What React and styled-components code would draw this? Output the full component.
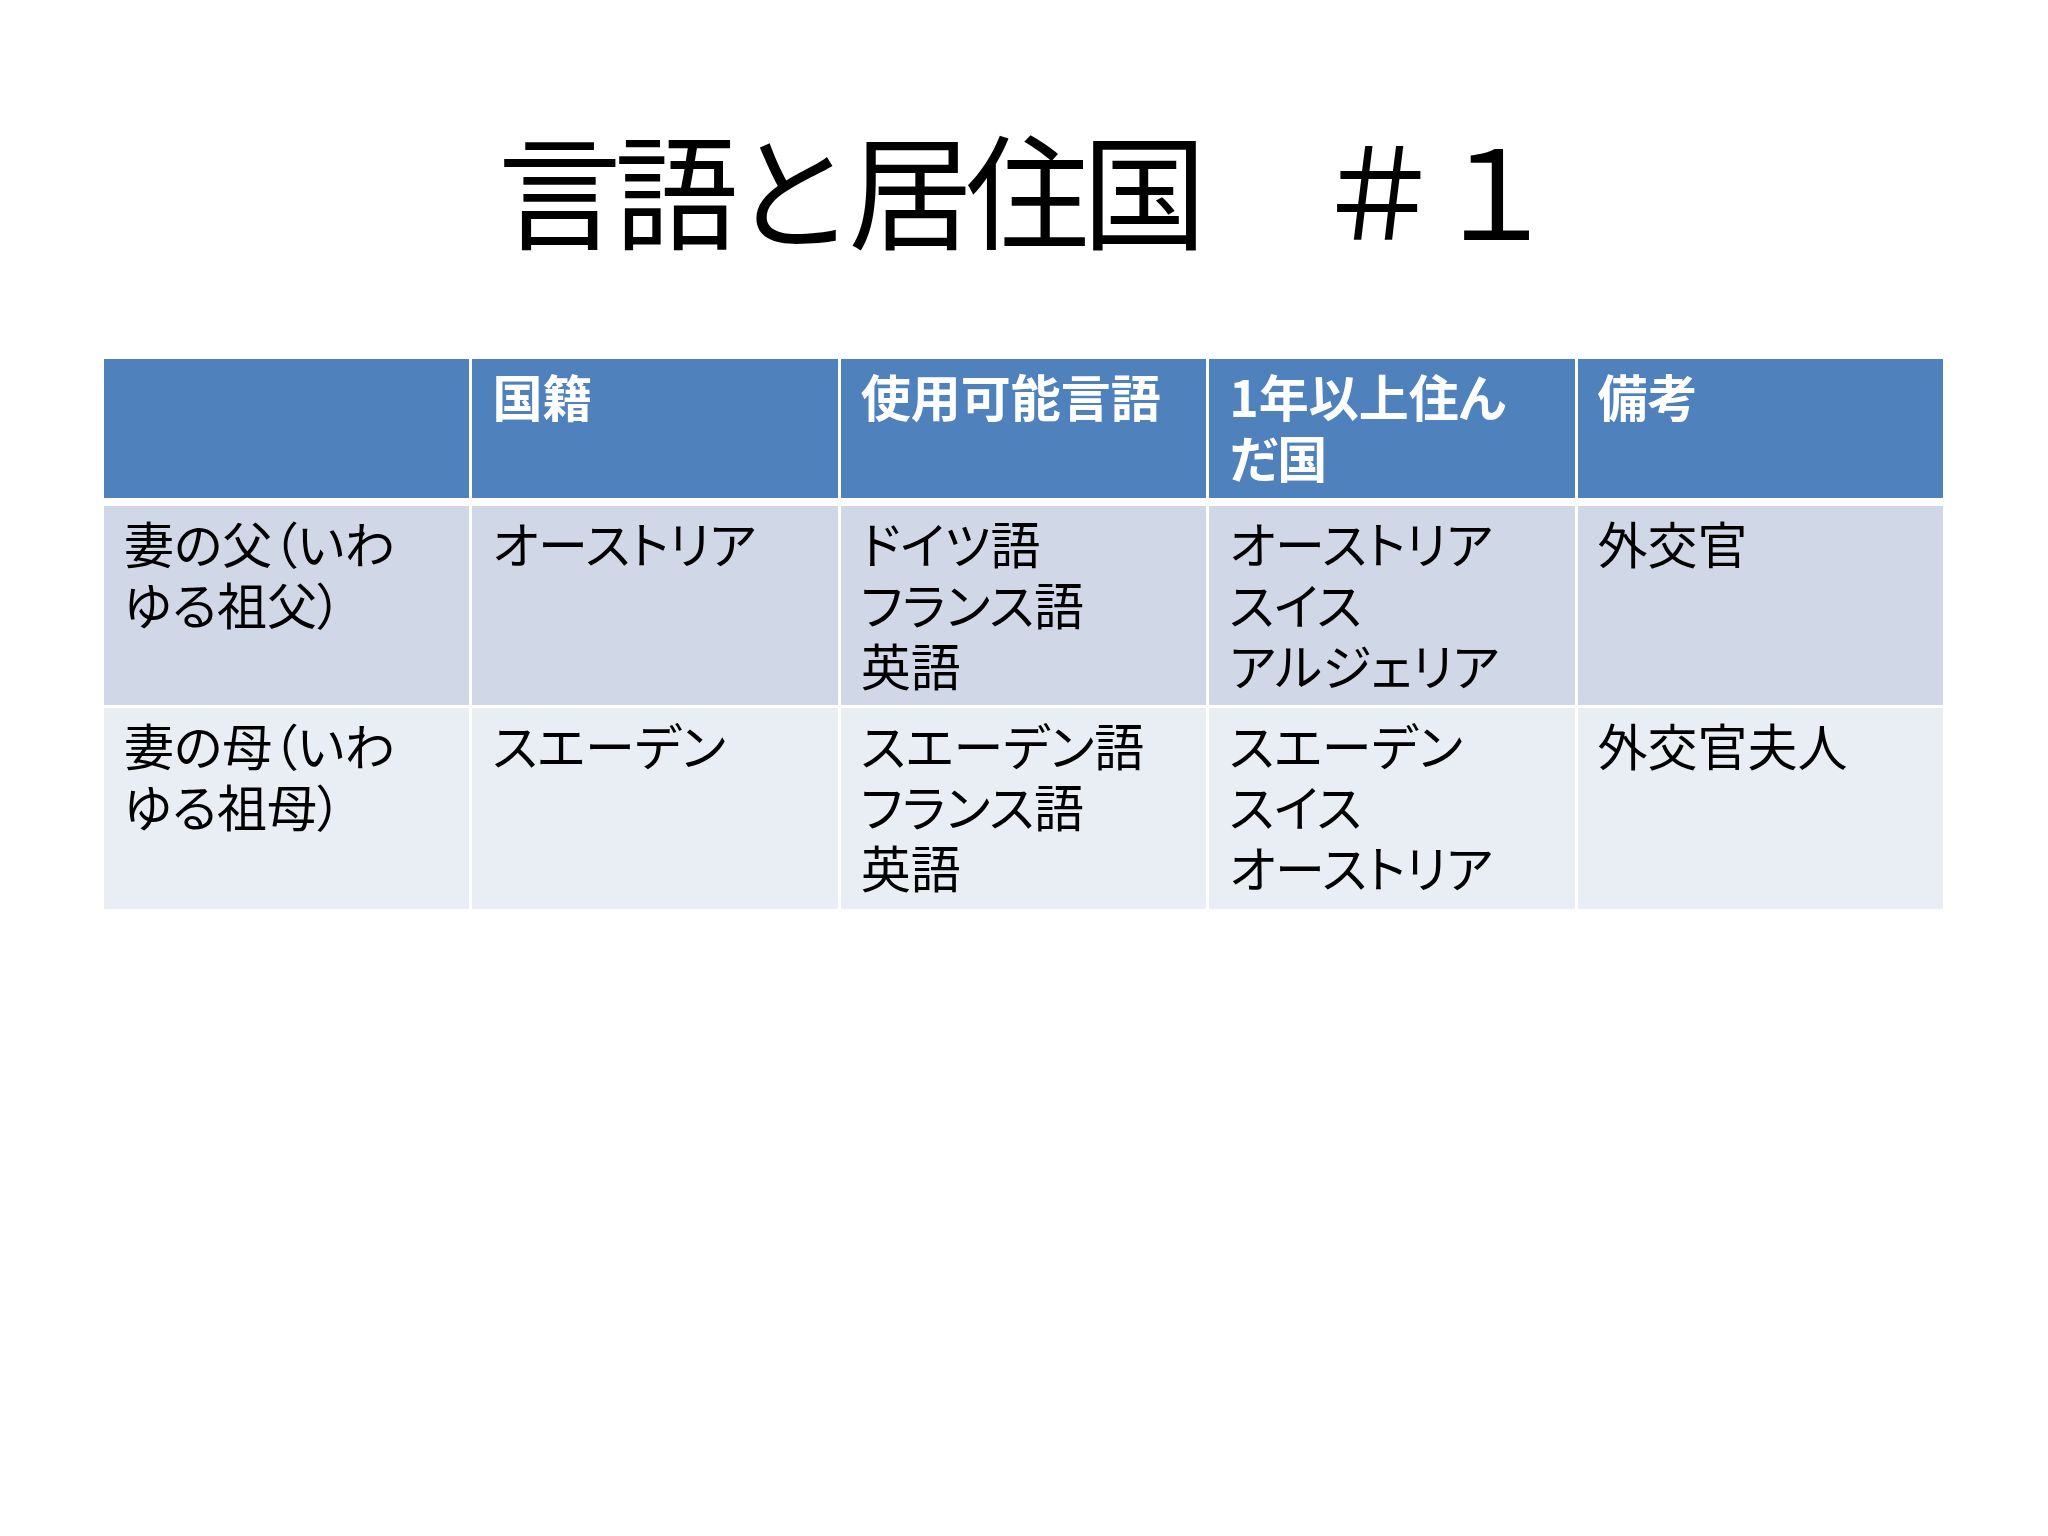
import React from "react";
import styled, { createGlobalStyle } from "styled-components";

const Global = createGlobalStyle`
  html, body { margin: 0; padding: 0; background: #ffffff; }
  body {
    font-family: "Noto Sans CJK JP", "Noto Sans", sans-serif;
  }
`;

const Slide = styled.div`
  width: 2048px;
  height: 1536px;
  background: #ffffff;
  display: flex;
  flex-direction: column;
  align-items: center;
  overflow: hidden;
`;

const Title = styled.h1`
  margin: 0;
  padding-top: 112px;
  height: 247px;
  box-sizing: border-box;
  font-family: "Noto Sans CJK JP", sans-serif;
  font-weight: 400;
  font-size: 124px;
  line-height: 1.2;
  letter-spacing: -7px;
  color: #000000;
  white-space: nowrap;
`;

const Table = styled.div`
  align-self: flex-start;
  margin-left: 104px;
  margin-top: 112px;
  width: 1839px;
  display: flex;
  flex-direction: column;
  gap: ${(p) => p.$gap || 3}px;
`;

const Row = styled.div`
  display: grid;
  grid-template-columns: repeat(5, 1fr);
  column-gap: 3px;
  height: ${(p) => p.$h}px;
`;

const Cell = styled.div`
  background: ${(p) => p.$bg};
  color: ${(p) => (p.$head ? "#ffffff" : "#000000")};
  font-weight: ${(p) => (p.$head ? 700 : 400)};
  font-family: "Noto Sans CJK JP", sans-serif;
  font-size: 50px;
  line-height: 61px;
  font-feature-settings: "palt";
  padding: 6px 18px 0 20px;
  box-sizing: border-box;
  white-space: nowrap;
`;

const Line = styled.div`
  height: 61px;
`;

const Body = styled.div`
  display: flex;
  flex-direction: column;
  gap: 3px;
`;

const HEAD_BG = "#4f81bd";
const ROW1_BG = "#d0d8e8";
const ROW2_BG = "#e9edf4";

const header = ["", "国籍", "使用可能言語", ["1年以上住ん", "だ国"], "備考"];
const rows = [
  {
    bg: ROW1_BG,
    h: 199,
    cells: [
      ["妻の父（いわ", "ゆる祖父）"],
      ["オーストリア"],
      ["ドイツ語", "フランス語", "英語"],
      ["オーストリア", "スイス", "アルジェリア"],
      ["外交官"],
    ],
  },
  {
    bg: ROW2_BG,
    h: 201,
    cells: [
      ["妻の母（いわ", "ゆる祖母）"],
      ["スエーデン"],
      ["スエーデン語", "フランス語", "英語"],
      ["スエーデン", "スイス", "オーストリア"],
      ["外交官夫人"],
    ],
  },
];

const Lines = ({ lines }) => {
  const arr = Array.isArray(lines) ? lines : [lines];
  return arr.map((l, i) => <Line key={i}>{l}</Line>);
};

export default function App() {
  return (
    <>
      <Global />
      <Slide>
        <Title>言語と居住国　＃１</Title>
        <Table $gap={8}>
          <Row $h={139}>
            {header.map((h, i) => (
              <Cell key={i} $bg={HEAD_BG} $head>
                <Lines lines={h} />
              </Cell>
            ))}
          </Row>
          <Body>
            {rows.map((r, ri) => (
              <Row key={ri} $h={r.h}>
                {r.cells.map((c, ci) => (
                  <Cell key={ci} $bg={r.bg}>
                    <Lines lines={c} />
                  </Cell>
                ))}
              </Row>
            ))}
          </Body>
        </Table>
      </Slide>
    </>
  );
}
